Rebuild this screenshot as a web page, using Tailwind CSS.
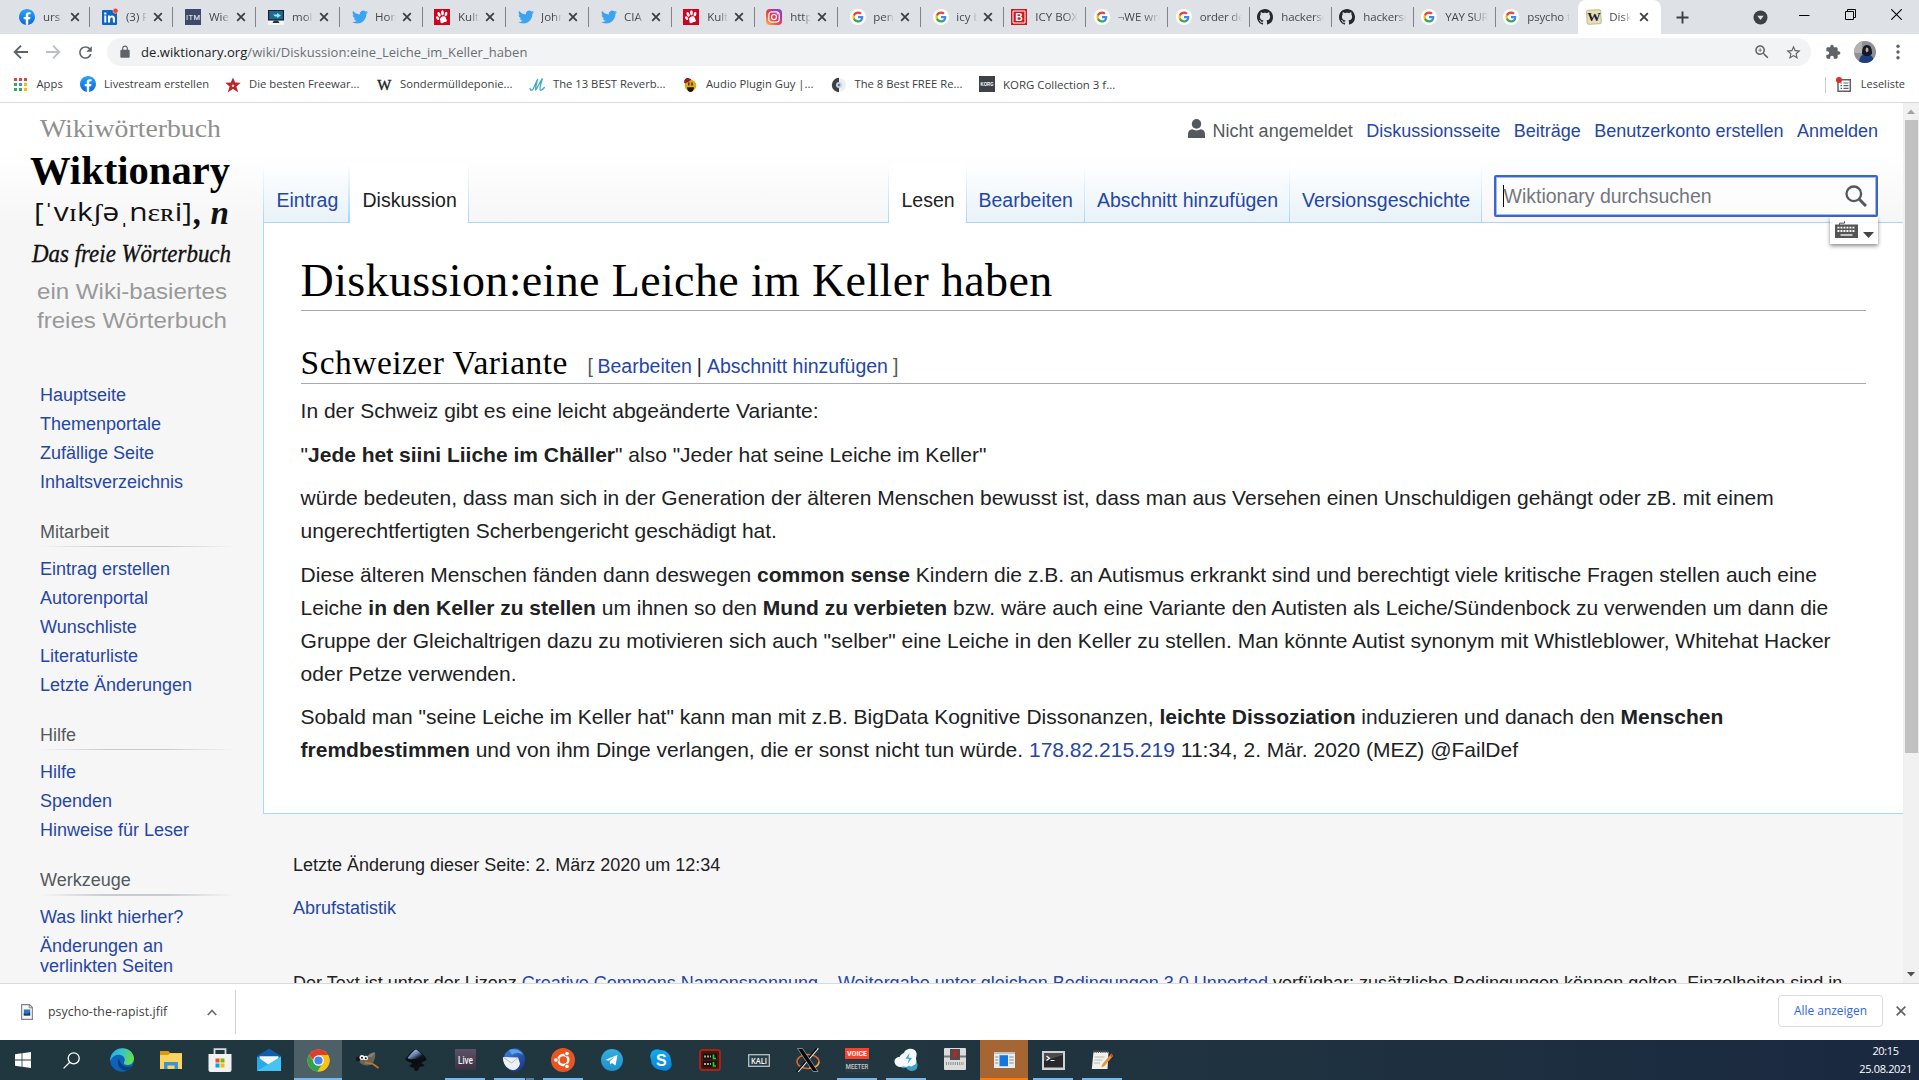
<!DOCTYPE html>
<html lang="de">
<head>
<meta charset="utf-8">
<title>Diskussion:eine Leiche im Keller haben – Wiktionary</title>
<script src="https://cdn.jsdelivr.net/npm/@tailwindcss/browser@4"></script>
</head>
<body class="flex h-[1080px] w-[1919px] flex-col overflow-hidden bg-white font-['Open_Sans',sans-serif]">

<svg class="absolute size-0" xmlns="http://www.w3.org/2000/svg">
  <defs>
    <linearGradient id="gfb" x1="0" y1="0" x2="0" y2="1"><stop offset="0" stop-color="#2aa4fb"/><stop offset="1" stop-color="#0a66e0"/></linearGradient>
    <linearGradient id="gig" x1="0" y1="1" x2="1" y2="0"><stop offset="0" stop-color="#fdc04e"/><stop offset=".4" stop-color="#f0453a"/><stop offset=".7" stop-color="#c22fa0"/><stop offset="1" stop-color="#5b4fd8"/></linearGradient>
    <linearGradient id="gedge" x1="0" y1="0" x2="1" y2=".3"><stop offset="0" stop-color="#2aa8e0"/><stop offset=".5" stop-color="#35c4c9"/><stop offset="1" stop-color="#62dd55"/></linearGradient>
    <linearGradient id="gsky" x1="0" y1="0" x2="0" y2="1"><stop offset="0" stop-color="#12a8ea"/><stop offset="1" stop-color="#0a86dd"/></linearGradient>
    <linearGradient id="gtg" x1="0" y1="0" x2="0" y2="1"><stop offset="0" stop-color="#35aee0"/><stop offset="1" stop-color="#1d90cb"/></linearGradient>
    <linearGradient id="glive" x1="0" y1="0" x2="0" y2="1"><stop offset="0" stop-color="#5c536a"/><stop offset="1" stop-color="#3a3144"/></linearGradient>
    <linearGradient id="gink" x1="0" y1="0" x2="1" y2="1"><stop offset="0" stop-color="#eef3fa"/><stop offset=".5" stop-color="#5d78a8"/><stop offset=".75" stop-color="#101318"/></linearGradient>
    <linearGradient id="gtb" x1="0" y1="0" x2="1" y2="1"><stop offset="0" stop-color="#3f86e6"/><stop offset="1" stop-color="#152f80"/></linearGradient>
  </defs>
  <symbol id="x" viewBox="0 0 10 10"><path d="M1.2 1.2l7.6 7.6M8.8 1.2L1.2 8.8" stroke="#3c4043" stroke-width="1.8" fill="none"/></symbol>
  <symbol id="fb" viewBox="0 0 24 24"><circle cx="12" cy="12" r="10" fill="#fff"/><path fill="url(#gfb)" d="M24 12.073c0-6.627-5.373-12-12-12s-12 5.373-12 12c0 5.990 4.388 10.954 10.125 11.854v-8.385H7.078v-3.470h3.047V9.430c0-3.007 1.792-4.669 4.533-4.669 1.312 0 2.686.235 2.686.235v2.953H15.830c-1.491 0-1.956.925-1.956 1.874v2.250h3.328l-.532 3.470h-2.796v8.385C19.612 23.027 24 18.062 24 12.073z"/></symbol>
  <symbol id="tw" viewBox="0 0 24 24"><path fill="#3aa3f2" d="M23.953 4.570a10 10 0 01-2.825.775 4.958 4.958 0 002.163-2.723c-.951.555-2.005.959-3.127 1.184a4.920 4.920 0 00-8.384 4.482C7.690 8.095 4.067 6.130 1.640 3.162a4.822 4.822 0 00-.666 2.475c0 1.710.87 3.213 2.188 4.096a4.904 4.904 0 01-2.228-.616v.06a4.923 4.923 0 003.946 4.827 4.996 4.996 0 01-2.212.085 4.936 4.936 0 004.604 3.417 9.867 9.867 0 01-6.102 2.105c-.39 0-.779-.023-1.170-.067a13.995 13.995 0 007.557 2.209c9.053 0 13.998-7.496 13.998-13.985 0-.21 0-.42-.015-.63A9.935 9.935 0 0024 4.590z"/></symbol>
  <symbol id="paw" viewBox="0 0 16 16"><path fill="#d0021f" d="M0 0h16v16H0z"/><g fill="#fff" transform="rotate(-12 8 8)"><path d="M5.800 9.200c1-1.600 3.800-2.400 5.300-.8.9 1.100.2 1.900.8 3 .7 1.300-.5 2.600-2 2.100-1.200-.4-1.900.8-3.200.5-1.500-.4-1.300-1.700-1-2.500.3-.9-.4-1.300.1-2.300z"/><ellipse cx="3.500" cy="8.200" rx="1.300" ry="2.100" transform="rotate(-25 3.500 8.200)"/><ellipse cx="5.700" cy="4.800" rx="1.400" ry="2.500" transform="rotate(-10 5.500 4.800)"/><ellipse cx="9.300" cy="4" rx="1.400" ry="2.600" transform="rotate(10 9.300 4)"/><ellipse cx="12.500" cy="6" rx="1.300" ry="2.300" transform="rotate(28 12.500 6)"/></g></symbol>
  <symbol id="gg" viewBox="0 0 32 32"><circle cx="16" cy="16" r="16" fill="#fff"/><g transform="translate(4 4)"><path fill="#4285f4" d="M22.560 12.250c0-.78-.07-1.530-.2-2.250H12v4.260h5.920c-.26 1.370-1.040 2.530-2.210 3.310v2.770h3.570c2.080-1.920 3.280-4.740 3.280-8.090z"/><path fill="#34a853" d="M12 23c2.970 0 5.460-.98 7.280-2.660l-3.570-2.770c-.98.66-2.230 1.060-3.710 1.060-2.860 0-5.290-1.930-6.160-4.530H2.180v2.840C3.990 20.530 7.700 23 12 23z"/><path fill="#fbbc05" d="M5.840 14.090c-.22-.66-.35-1.360-.35-2.090s.13-1.430.35-2.090V7.070H2.180C1.430 8.550 1 10.220 1 12s.43 3.450 1.180 4.930l3.660-2.840z"/><path fill="#ea4335" d="M12 5.380c1.620 0 3.060.56 4.210 1.640l3.150-3.150C17.450 2.090 14.970 1 12 1 7.700 1 3.990 3.470 2.180 7.070l3.660 2.840c.87-2.600 3.300-4.530 6.160-4.530z"/></g></symbol>
  <symbol id="gh" viewBox="0 0 16 16"><path fill="#24292e" d="M8 0C3.580 0 0 3.580 0 8c0 3.540 2.290 6.530 5.470 7.590.4.07.55-.17.55-.38 0-.19-.01-.82-.01-1.490-2.010.37-2.530-.49-2.690-.94-.09-.23-.48-.94-.82-1.130-.28-.15-.68-.52-.01-.53.63-.01 1.080.58 1.230.82.72 1.210 1.870.87 2.330.66.07-.52.28-.87.51-1.070-1.780-.2-3.640-.89-3.640-3.950 0-.87.31-1.590.82-2.150-.08-.2-.36-1.020.08-2.120 0 0 .67-.21 2.200.82.64-.18 1.320-.27 2-.27s1.360.09 2 .27c1.530-1.040 2.200-.82 2.200-.82.44 1.100.16 1.920.08 2.120.51.56.82 1.270.82 2.150 0 3.070-1.870 3.750-3.650 3.950.29.25.54.73.54 1.480 0 1.070-.01 1.930-.01 2.200 0 .21.15.46.55.38A8.010 8.010 0 0016 8c0-4.420-3.580-8-8-8z"/></symbol>
</svg>

<!-- Tab strip -->
<header class="flex h-[34px] shrink-0 items-center bg-[#dee1e6] pl-[7.4px] text-[11.5px] text-[#45494d]">
  <div class="flex h-full w-[83.04px] shrink-0 items-center pl-[12px]"><svg class="size-4 shrink-0"><use href="#fb"/></svg><span class="ml-[7.500px] w-[21px] overflow-hidden whitespace-nowrap [mask-image:linear-gradient(to_right,black_60%,transparent)]">urs</span><svg class="ml-[6px] size-[10px] shrink-0"><use href="#x"/></svg><i class="ml-auto h-5 w-px bg-[#808488]"></i></div>
  <div class="flex h-full w-[83.04px] shrink-0 items-center pl-[12px]"><svg class="size-4 shrink-0 overflow-visible" viewBox="0 0 16 16"><rect y="1" width="15" height="15" rx="1" fill="#0a66c2"/><path d="M2.300 6.500h2v7h-2zM2.200 3.500h2.200v2H2.200zM6 6.500h2v1c1-1.700 5-1.700 5 2v4h-2.100V10c0-2.300-2.800-2-2.800 0v3.500H6z" fill="#fff"/><circle cx="13.500" cy="1.800" r="2.600" fill="#f5402c" stroke="#dee1e6" stroke-width=".6"/></svg><span class="ml-[7.500px] w-[21px] overflow-hidden whitespace-nowrap [mask-image:linear-gradient(to_right,black_60%,transparent)]">(3) P</span><svg class="ml-[6px] size-[10px] shrink-0"><use href="#x"/></svg><i class="ml-auto h-5 w-px bg-[#808488]"></i></div>
  <div class="flex h-full w-[83.04px] shrink-0 items-center pl-[12px]"><svg class="size-4 shrink-0" viewBox="0 0 16 16"><path fill="#3b4a6b" d="M0 0h16v16H0z"/><text x="1" y="11" font-size="7.500" font-family="Roboto" fill="#fff" textLength="14">ITM</text></svg><span class="ml-[7.500px] w-[21px] overflow-hidden whitespace-nowrap [mask-image:linear-gradient(to_right,black_60%,transparent)]">Wien</span><svg class="ml-[6px] size-[10px] shrink-0"><use href="#x"/></svg><i class="ml-auto h-5 w-px bg-[#808488]"></i></div>
  <div class="flex h-full w-[83.04px] shrink-0 items-center pl-[12px]"><svg class="size-4 shrink-0" viewBox="0 0 16 16"><path d="M0 12h16v4H0z" fill="#f4f6f8"/><rect y="1" width="16" height="10.500" fill="#16212f"/><rect x="1.200" y="2" width="13.600" height="8.300" fill="#1b6b92"/><path d="M5 5.500h4V4l4 2.500L9 9V7.500H7z" fill="#9fe4f0"/><path d="M6 11.500h4l1.500 2.500h-7z" fill="#28323d"/></svg><span class="ml-[7.500px] w-[21px] overflow-hidden whitespace-nowrap [mask-image:linear-gradient(to_right,black_60%,transparent)]">mold</span><svg class="ml-[6px] size-[10px] shrink-0"><use href="#x"/></svg><i class="ml-auto h-5 w-px bg-[#808488]"></i></div>
  <div class="flex h-full w-[83.04px] shrink-0 items-center pl-[12px]"><svg class="size-4 shrink-0"><use href="#tw"/></svg><span class="ml-[7.500px] w-[21px] overflow-hidden whitespace-nowrap [mask-image:linear-gradient(to_right,black_60%,transparent)]">Hom</span><svg class="ml-[6px] size-[10px] shrink-0"><use href="#x"/></svg><i class="ml-auto h-5 w-px bg-[#808488]"></i></div>
  <div class="flex h-full w-[83.04px] shrink-0 items-center pl-[11px]"><svg class="size-4 shrink-0"><use href="#paw"/></svg><span class="ml-[8.500px] w-[21px] overflow-hidden whitespace-nowrap [mask-image:linear-gradient(to_right,black_60%,transparent)]">Kultu</span><svg class="ml-[6px] size-[10px] shrink-0"><use href="#x"/></svg><i class="ml-auto h-5 w-px bg-[#808488]"></i></div>
  <div class="flex h-full w-[83.04px] shrink-0 items-center pl-[12px]"><svg class="size-4 shrink-0"><use href="#tw"/></svg><span class="ml-[7.500px] w-[21px] overflow-hidden whitespace-nowrap [mask-image:linear-gradient(to_right,black_60%,transparent)]">John</span><svg class="ml-[6px] size-[10px] shrink-0"><use href="#x"/></svg><i class="ml-auto h-5 w-px bg-[#808488]"></i></div>
  <div class="flex h-full w-[83.04px] shrink-0 items-center pl-[12px]"><svg class="size-4 shrink-0"><use href="#tw"/></svg><span class="ml-[7.500px] w-[21px] overflow-hidden whitespace-nowrap [mask-image:linear-gradient(to_right,black_60%,transparent)]">CIA</span><svg class="ml-[6px] size-[10px] shrink-0"><use href="#x"/></svg><i class="ml-auto h-5 w-px bg-[#808488]"></i></div>
  <div class="flex h-full w-[83.04px] shrink-0 items-center pl-[11px]"><svg class="size-4 shrink-0"><use href="#paw"/></svg><span class="ml-[8.500px] w-[21px] overflow-hidden whitespace-nowrap [mask-image:linear-gradient(to_right,black_60%,transparent)]">Kultu</span><svg class="ml-[6px] size-[10px] shrink-0"><use href="#x"/></svg><i class="ml-auto h-5 w-px bg-[#808488]"></i></div>
  <div class="flex h-full w-[83.04px] shrink-0 items-center pl-[11px]"><svg class="size-4 shrink-0" viewBox="0 0 16 16"><rect width="16" height="16" rx="4" fill="url(#gig)"/><rect x="2.800" y="2.800" width="10.400" height="10.400" rx="3" fill="none" stroke="#fff" stroke-width="1.200"/><circle cx="8" cy="8" r="2.500" fill="none" stroke="#fff" stroke-width="1.200"/><circle cx="11.200" cy="4.800" r=".7" fill="#fff"/></svg><span class="ml-[8.500px] w-[21px] overflow-hidden whitespace-nowrap [mask-image:linear-gradient(to_right,black_60%,transparent)]">https</span><svg class="ml-[6px] size-[10px] shrink-0"><use href="#x"/></svg><i class="ml-auto h-5 w-px bg-[#808488]"></i></div>
  <div class="flex h-full w-[83.04px] shrink-0 items-center pl-[12px]"><svg class="size-4 shrink-0"><use href="#gg"/></svg><span class="ml-[7.500px] w-[21px] overflow-hidden whitespace-nowrap [mask-image:linear-gradient(to_right,black_60%,transparent)]">pent</span><svg class="ml-[6px] size-[10px] shrink-0"><use href="#x"/></svg><i class="ml-auto h-5 w-px bg-[#808488]"></i></div>
  <div class="flex h-full w-[83.04px] shrink-0 items-center pl-[12px]"><svg class="size-4 shrink-0"><use href="#gg"/></svg><span class="ml-[7.500px] w-[21px] overflow-hidden whitespace-nowrap [mask-image:linear-gradient(to_right,black_60%,transparent)]">icy b</span><svg class="ml-[6px] size-[10px] shrink-0"><use href="#x"/></svg><i class="ml-auto h-5 w-px bg-[#808488]"></i></div>
  <div class="flex h-full w-[82px] shrink-0 items-center pl-[7.500px]"><svg class="size-4 shrink-0" viewBox="0 0 16 16"><path fill="#d5121a" d="M0 0h16v16H0z"/><path d="M2 2h12v12H2z" fill="none" stroke="#fff" stroke-width="1"/><text x="4.300" y="11.700" font-size="10.500" font-weight="700" font-family="Liberation Sans" fill="#fff">B</text></svg><span class="ml-[8px] w-[43px] overflow-hidden whitespace-nowrap [mask-image:linear-gradient(to_right,black_70%,transparent)]">ICY BOX</span><i class="ml-auto h-5 w-px bg-[#808488]"></i></div>
  <div class="flex h-full w-[82px] shrink-0 items-center pl-[8.500px]"><svg class="size-4 shrink-0"><use href="#gg"/></svg><span class="ml-[7.500px] w-[42px] overflow-hidden whitespace-nowrap [mask-image:linear-gradient(to_right,black_60%,transparent)]">¬WE wro</span><i class="ml-auto h-5 w-px bg-[#808488]"></i></div>
  <div class="flex h-full w-[82px] shrink-0 items-center pl-[8.500px]"><svg class="size-4 shrink-0"><use href="#gg"/></svg><span class="ml-[7.500px] w-[42px] overflow-hidden tracking-[-0.200px] whitespace-nowrap [mask-image:linear-gradient(to_right,black_70%,transparent)]">order def</span><i class="ml-auto h-5 w-px bg-[#808488]"></i></div>
  <div class="flex h-full w-[82px] shrink-0 items-center pl-[7.500px]"><svg class="size-4 shrink-0"><use href="#gh"/></svg><span class="ml-[8px] w-[43px] overflow-hidden tracking-[-0.150px] whitespace-nowrap [mask-image:linear-gradient(to_right,black_75%,transparent)]">hackersc</span><i class="ml-auto h-5 w-px bg-[#808488]"></i></div>
  <div class="flex h-full w-[82px] shrink-0 items-center pl-[7.500px]"><svg class="size-4 shrink-0"><use href="#gh"/></svg><span class="ml-[8px] w-[43px] overflow-hidden tracking-[-0.150px] whitespace-nowrap [mask-image:linear-gradient(to_right,black_75%,transparent)]">hackersc</span><i class="ml-auto h-5 w-px bg-[#808488]"></i></div>
  <div class="flex h-full w-[82px] shrink-0 items-center pl-[7.500px]"><svg class="size-4 shrink-0"><use href="#gg"/></svg><span class="ml-[8px] w-[43px] overflow-hidden tracking-[-0.250px] whitespace-nowrap [mask-image:linear-gradient(to_right,black_65%,transparent)]">YAY SURF</span><i class="ml-auto h-5 w-px bg-[#808488]"></i></div>
  <div class="flex h-full w-[82px] shrink-0 items-center pl-[7.500px]"><svg class="size-4 shrink-0"><use href="#gg"/></svg><span class="ml-[8px] w-[43px] overflow-hidden tracking-[-0.150px] whitespace-nowrap [mask-image:linear-gradient(to_right,black_80%,transparent)]">psycho th</span></div>
  <div class="flex h-full w-[83px] shrink-0 items-center rounded-t-lg bg-white pl-[8px]"><svg class="size-4 shrink-0" viewBox="0 0 16 16"><rect x=".8" y="1" width="14.200" height="14" rx="1.500" fill="#e9dfb4" stroke="#b9ab7c" stroke-width=".8" transform="rotate(-3 8 8)"/><text x="1.200" y="12.300" font-size="12.500" font-weight="700" font-family="Liberation Serif" fill="#161a3c" textLength="13.500" lengthAdjust="spacingAndGlyphs">W</text></svg><span class="ml-[7.500px] w-[22px] overflow-hidden whitespace-nowrap [mask-image:linear-gradient(to_right,black_60%,transparent)]">Disku</span><svg class="ml-[8px] size-[10px] shrink-0"><use href="#x"/></svg></div>
  <svg class="ml-[15px] size-[13px]" viewBox="0 0 13 13"><path d="M6.500.5v12M.5 6.500h12" stroke="#3c4043" stroke-width="1.900"/></svg>
  <svg class="ml-[64px] size-[15px]" viewBox="0 0 15 15"><circle cx="7.500" cy="7.500" r="7" fill="#3c4043"/><path d="M4.300 5.700h6.400L7.500 10z" fill="#dee1e6"/></svg>
  <svg class="mb-[6px] ml-[31px] size-[11px]" viewBox="0 0 11 11"><path d="M0 6.500h10.500" stroke="#000"/></svg>
  <svg class="mb-[6px] ml-[35px] size-[11px]" viewBox="0 0 11 11"><path d="M.5 2.500h8v8h-8zM2.500 2.500v-2h8v8h-2" fill="none" stroke="#000"/></svg>
  <svg class="mb-[6px] ml-[35px] size-[11px]" viewBox="0 0 11 11"><path d="M.3.300l10.400 10.400M10.700.3L.3 10.700" stroke="#000" stroke-width="1.100"/></svg>
</header>

<!-- Toolbar -->
<div class="flex h-[36px] shrink-0 items-center bg-white pl-[13px]">
  <svg class="size-4" viewBox="0 0 16 16"><path d="M15 8H2M8 1.700L1.700 8 8 14.300" stroke="#5f6368" stroke-width="1.900" fill="none"/></svg>
  <svg class="ml-[16px] size-4" viewBox="0 0 16 16"><path d="M1 8h13M8 1.700L14.300 8 8 14.300" stroke="#bdc0c3" stroke-width="1.900" fill="none"/></svg>
  <svg class="ml-[14.500px] size-[19px]" viewBox="0 0 24 24"><path fill="#5f6368" d="M17.650 6.350C16.200 4.900 14.210 4 12 4c-4.420 0-7.990 3.580-7.990 8s3.570 8 7.990 8c3.730 0 6.840-2.550 7.730-6h-2.080c-.82 2.330-3.040 4-5.650 4-3.310 0-6-2.690-6-6s2.690-6 6-6c1.660 0 3.140.69 4.220 1.780L13 11h7V4l-2.350 2.350z"/></svg>
  <div class="ml-[12.500px] flex h-7 w-[1704px] items-center rounded-full bg-[#f1f3f4] pl-[11px]">
    <svg class="size-[14px]" viewBox="0 0 24 24"><path fill="#5f6368" d="M18 8h-1V6c0-2.760-2.240-5-5-5S7 3.240 7 6v2H6c-1.100 0-2 .9-2 2v10c0 1.100.9 2 2 2h12c1.100 0 2-.9 2-2V10c0-1.100-.9-2-2-2zM9 6c0-1.660 1.340-3 3-3s3 1.340 3 3v2H9z"/></svg>
    <span class="mt-px ml-[9px] text-[13px] tracking-[0.065px] text-[#6b6f74]"><span class="text-[#202124]">de.wiktionary.org</span>/wiki/Diskussion:eine_Leiche_im_Keller_haben</span>
    <svg class="mr-[14px] ml-auto size-[18px]" viewBox="0 0 24 24"><path fill="#5f6368" d="M15.500 14h-.79l-.28-.27C15.410 12.590 16 11.110 16 9.500 16 5.910 13.090 3 9.500 3S3 5.910 3 9.500 5.910 16 9.500 16c1.610 0 3.090-.59 4.230-1.570l.27.28v.79l5 4.990L20.490 19l-4.990-5zm-6 0C7.010 14 5 11.990 5 9.500S7.010 5 9.500 5 14 7.010 14 9.500 11.990 14 9.500 14zm2.500-4h-2v2H9v-2H7V9h2V7h1v2h2v1z"/></svg>
    <svg class="mr-[9.500px] size-[17px]" viewBox="0 0 24 24"><path fill="#5f6368" d="M22 9.240l-7.190-.62L12 2 9.190 8.630 2 9.240l5.460 4.730L5.820 21 12 17.270 18.180 21l-1.630-7.030L22 9.240zM12 15.400l-3.760 2.270 1-4.280-3.320-2.880 4.380-.38L12 6.100l1.710 4.040 4.380.38-3.320 2.880 1 4.280L12 15.400z"/></svg>
  </div>
  <svg class="ml-[14px] size-[16px]" viewBox="0 0 24 24"><path fill="#5f6368" d="M20.500 11H19V7c0-1.100-.9-2-2-2h-4V3.500C13 2.120 11.880 1 10.500 1S8 2.120 8 3.500V5H4c-1.100 0-1.990.9-1.990 2v3.800H3.500c1.490 0 2.700 1.210 2.700 2.700s-1.210 2.700-2.700 2.700H2V20c0 1.100.9 2 2 2h3.800v-1.500c0-1.490 1.210-2.700 2.700-2.700 1.490 0 2.700 1.210 2.700 2.700V22H17c1.100 0 2-.9 2-2v-4h1.500c1.380 0 2.500-1.120 2.500-2.500S21.880 11 20.500 11z"/></svg>
  <svg class="ml-[13px] size-[22px]" viewBox="0 0 22 22"><defs><clipPath id="av"><circle cx="11" cy="11" r="11"/></clipPath></defs><g clip-path="url(#av)"><path fill="#8f8f94" d="M0 0h22v22H0z"/><path fill="#b5b3b2" d="M0 0h8v12H0z"/><path fill="#1f3f7c" d="M5 22c0-6 3-9 7-9s8 2 8 9z"/><path fill="#14182a" d="M8 13c0-5 1-9 5-9s5 4 5 9l-3 2h-4z"/><path fill="#c8a493" d="M12 6.500l2.200.5.300 3-1.800 1.500-1.200-2z"/></g></svg>
  <svg class="ml-[13px] size-[18px]" viewBox="0 0 18 18" fill="#5f6368"><circle cx="9" cy="3.200" r="1.700"/><circle cx="9" cy="9" r="1.700"/><circle cx="9" cy="14.800" r="1.700"/></svg>
</div>

<!-- Bookmarks -->
<nav class="flex h-[32px] shrink-0 items-center pb-[3px] pl-[13.500px] text-[11.250px] whitespace-nowrap text-[#3c4043]">
  <div class="flex w-[66.500px] items-center gap-[10px]"><svg class="size-[13px]" viewBox="0 0 13 13"><path fill="#ea4335" d="M0 0h3v3H0zM5 0h3v3H5zM10 0h3v3h-3z"/><path fill="#34a853" d="M0 5h3v3H0zM0 10h3v3H0zM5 10h3v3H5z"/><path fill="#4285f4" d="M5 5h3v3H5z"/><path fill="#fbbc05" d="M10 5h3v3h-3zM10 10h3v3h-3z"/></svg>Apps</div>
  <div class="flex w-[145px] items-center gap-2"><svg class="size-4"><use href="#fb"/></svg><span class="text-[11.150px]">Livestream erstellen</span></div>
  <div class="flex w-[151px] items-center gap-2"><svg class="size-4" viewBox="0 0 16 16"><path fill="#b3282d" d="M8 .5l2.200 5 5.500.3-4.300 3.600 1.800 5.800L8 12l-5.200 3.200 1.800-5.800L.3 5.800l5.500-.3z"/><circle cx="8" cy="8.800" r="1.300" fill="#f0c8c8"/></svg>Die besten Freewar...</div>
  <div class="flex w-[153px] items-center gap-2"><svg class="size-4" viewBox="0 0 16 16"><text x="1.200" y="13" font-size="14" font-family="Liberation Serif" fill="#202020" stroke="#202020" stroke-width=".4" textLength="14" lengthAdjust="spacingAndGlyphs">W</text></svg>Sondermülldeponie...</div>
  <div class="flex w-[153px] items-center gap-2"><svg class="size-4" viewBox="0 0 16 16"><path d="M1 11.500c0 2 2 2.500 3.300.3C5.800 9 7 5 8.800 2 7.500 6 6.300 10 6.800 12.800 8.500 11 10.500 5.500 13.500 1.500 12 6 10.200 11.500 11.300 13c1 .8 2.500-.5 4-2.500" fill="none" stroke="#45a9c0" stroke-width="1.300" stroke-linecap="round"/></svg>The 13 BEST Reverb...</div>
  <div class="flex w-[148.500px] items-center gap-2"><svg class="size-4" viewBox="0 0 16 16"><circle cx="8.500" cy="8.500" r="5.800" fill="#e2a719"/><path d="M2 5.500C2 2 4 .5 6.500 1l3 1.500-2.500 2-4 2z" fill="#8c2022"/><path d="M6.800 5.500v3M10 5.500v3" stroke="#201708" stroke-width="1.200"/><path d="M5 10.200h7c-.3 3.600-1.500 4.800-3.500 4.800S5.300 13.800 5 10.200z" fill="#201708"/></svg>Audio Plugin Guy |...</div>
  <div class="flex w-[148.500px] items-center gap-2"><svg class="size-4" viewBox="0 0 16 16"><circle cx="8" cy="8" r="7" fill="#eceef0"/><path fill="#3d3f43" d="M8 .8A7.200 7.200 0 008 15.200z"/><circle cx="8" cy="8" r="3" fill="#bcd6e2"/><circle cx="8" cy="8" r="1.200" fill="#5a7f92"/></svg>The 8 Best FREE Re...</div>
  <div class="flex items-center gap-2"><svg class="size-4" viewBox="0 0 16 16"><path fill="#3e4247" d="M0 0h16v16H0z"/><text x="1.500" y="10" font-size="5" font-weight="700" font-family="Liberation Sans" fill="#fff" textLength="13" lengthAdjust="spacingAndGlyphs">KORG</text></svg><span class="text-[11.450px]">KORG Collection 3 f...</span></div>
  <i class="ml-auto h-4 w-px bg-[#c9ccd0]"></i>
  <svg class="ml-[10px] size-4" viewBox="0 0 16 16"><path d="M3 2.700h11.300v11.600H2V4.500" fill="none" stroke="#5f6368" stroke-width="1.500"/><path d="M4.500 6h1.500M4.500 8.700h1.500M4.500 11.400h1.500M7.500 6h5M7.500 8.700h5M7.500 11.400h5" stroke="#5f6368" stroke-width="1.200"/><circle cx="3" cy="3" r="3" fill="#d93025"/></svg>
  <span class="mr-[14px] ml-[9px] text-[11px]">Leseliste</span>
</nav>
<div class="h-px shrink-0 bg-[#d8dadc]"></div>

<!-- Page -->
<div class="flex h-[880px] shrink-0 overflow-hidden bg-[#f6f6f6] font-['Liberation_Sans',Arial,sans-serif]">
  <!-- Sidebar -->
  <aside class="flex w-[263px] shrink-0 flex-col text-[18px] text-[#2546a6]">
    <div class="h-[278px] shrink-0 bg-[linear-gradient(#fff_0,#fff_50px,#f6f6f6_120px)]">
      <svg class="h-[240px] w-[263px]" viewBox="0 103 263 240">
        <text x="40" y="137" font-family="Liberation Serif" font-size="25" fill="#8f8f8f" textLength="181" lengthAdjust="spacingAndGlyphs">Wikiwörterbuch</text>
        <text x="30" y="184" font-family="Liberation Serif" font-size="40" font-weight="700" textLength="200" lengthAdjust="spacingAndGlyphs">Wiktionary</text>
        <text x="34" y="221" font-family="Open Sans" font-size="26" fill="#111" textLength="158" lengthAdjust="spacingAndGlyphs">[ˈvɪkʃəˌnɛʀi]</text>
        <text x="194" y="224" font-family="Liberation Serif" font-size="34" font-weight="700" font-style="italic" fill="#111" textLength="35" lengthAdjust="spacingAndGlyphs">, n</text>
        <text x="32" y="262" font-family="Liberation Serif" font-size="25" font-style="italic" fill="#111" stroke="#111" stroke-width=".35" textLength="199" lengthAdjust="spacingAndGlyphs">Das freie Wörterbuch</text>
        <text x="37" y="299" font-family="Liberation Sans" font-size="22.500" fill="#999" textLength="190" lengthAdjust="spacingAndGlyphs">ein Wiki-basiertes</text>
        <text x="37" y="328" font-family="Liberation Sans" font-size="22.500" fill="#999" textLength="190" lengthAdjust="spacingAndGlyphs">freies Wörterbuch</text>
      </svg>
    </div>
    <ul class="pl-[40px] leading-[29px]">
      <li>Hauptseite</li><li>Themenportale</li><li>Zufällige Seite</li><li>Inhaltsverzeichnis</li>
    </ul>
    <h3 class="pt-[25px] pb-[4px] pl-[40px] leading-[20px] text-[#54595d]">Mitarbeit</h3>
    <div class="mb-[8px] ml-[40px] h-px w-[195px] shrink-0 bg-[linear-gradient(to_right,transparent,#c8ccd1_33%,#c8ccd1_66%,transparent)]"></div>
    <ul class="pl-[40px] leading-[29px]">
      <li>Eintrag erstellen</li><li>Autorenportal</li><li>Wunschliste</li><li>Literaturliste</li><li>Letzte Änderungen</li>
    </ul>
    <h3 class="pt-[25px] pb-[4px] pl-[40px] leading-[20px] text-[#54595d]">Hilfe</h3>
    <div class="mb-[8px] ml-[40px] h-px w-[195px] shrink-0 bg-[linear-gradient(to_right,transparent,#c8ccd1_33%,#c8ccd1_66%,transparent)]"></div>
    <ul class="pl-[40px] leading-[29px]">
      <li>Hilfe</li><li>Spenden</li><li>Hinweise für Leser</li>
    </ul>
    <h3 class="pt-[25px] pb-[4px] pl-[40px] leading-[20px] text-[#54595d]">Werkzeuge</h3>
    <div class="mb-[7px] ml-[40px] h-[2px] w-[195px] shrink-0 bg-[linear-gradient(to_right,transparent,#c8ccd1_33%,#c8ccd1_66%,transparent)]"></div>
    <ul class="pl-[40px]">
      <li class="leading-[29px]">Was linkt hierher?</li><li class="pt-[4px] leading-[20px]">Änderungen an<br>verlinkten Seiten</li>
    </ul>
  </aside>

  <!-- Main column -->
  <div class="flex w-[1640px] shrink-0 flex-col">
    <div class="flex h-[120px] shrink-0 flex-col bg-[linear-gradient(#fff_0,#fff_50px,#f6f6f6_120px)]">
      <div class="flex h-[60px] items-start justify-end gap-[13.500px] pt-[17px] pr-[25px] text-[18px] leading-[22px] text-[#2546a6]">
        <span class="flex text-[#54595d]"><svg class="-mt-[1px] mr-[7.500px] h-[19px] w-[17px]" viewBox="0 0 17 19" fill="#54595d"><ellipse cx="8.500" cy="4.900" rx="4.700" ry="4.900"/><path d="M0 19v-4c0-2.500 1.500-4.500 4.300-4.700 2.400 1.500 6 1.500 8.400 0C15.500 10.500 17 12.500 17 15v4z"/></svg>Nicht angemeldet</span>
        <span>Diskussionsseite</span><span>Beiträge</span><span>Benutzerkonto erstellen</span><span>Anmelden</span>
      </div>
      <div class="flex h-[60px] text-[19.500px] leading-[24px] whitespace-nowrap text-[#2546a6]">
        <i class="w-px bg-linear-to-b from-white to-[#a7d7f9]"></i>
        <div class="w-[84px] border-b border-[#a7d7f9] bg-linear-to-b from-white to-[#e8f2f8] pt-[25px] pl-[12.500px]">Eintrag</div>
        <i class="w-[2px] bg-linear-to-b from-white to-[#a7d7f9]"></i>
        <div class="w-[118px] bg-white pt-[25px] pl-[12.500px] text-[#202122]">Diskussion</div>
        <i class="w-px bg-linear-to-b from-white to-[#a7d7f9]"></i>
        <div class="w-[419px] border-b border-[#a7d7f9]"></div>
        <i class="w-px bg-linear-to-b from-white to-[#a7d7f9]"></i>
        <div class="w-[77px] bg-white pt-[25px] pl-[12.500px] text-[#202122]">Lesen</div>
        <i class="w-px bg-linear-to-b from-white to-[#a7d7f9]"></i>
        <div class="w-[117px] border-b border-[#a7d7f9] bg-linear-to-b from-white to-[#e8f2f8] pt-[25px] pl-[11.500px]">Bearbeiten</div>
        <i class="w-px bg-linear-to-b from-white to-[#a7d7f9]"></i>
        <div class="w-[204px] border-b border-[#a7d7f9] bg-linear-to-b from-white to-[#e8f2f8] pt-[25px] pl-[12px]">Abschnitt hinzufügen</div>
        <i class="w-px bg-linear-to-b from-white to-[#a7d7f9]"></i>
        <div class="w-[191px] border-b border-[#a7d7f9] bg-linear-to-b from-white to-[#e8f2f8] pt-[25px] pl-[12px]">Versionsgeschichte</div>
        <i class="w-px bg-linear-to-b from-white to-[#a7d7f9]"></i>
        <div class="relative flex-1 border-b border-[#a7d7f9] pt-[12px] pl-[12px]">
          <div class="flex h-[42px] w-[384px] items-center rounded-[2px] border-2 border-[#3a66cc] bg-white/60 pl-[7px] shadow-[inset_0_0_0_1px_#a4b8e8]">
            <i class="h-[22px] w-px bg-black"></i><span class="-mt-px -ml-[0.500px] text-[#72777d]">Wiktionary durchsuchen</span>
            <svg class="mr-[9px] ml-auto h-[22px] w-[22px]" viewBox="0 0 22 22" fill="none" stroke="#54595d"><circle cx="8.800" cy="8.800" r="7.300" stroke-width="2.300"/><path d="M14 14l7 7" stroke-width="3"/></svg>
          </div>
          <div class="absolute top-[54px] right-[25px] flex h-[27px] w-[48px] items-center bg-white/85 pl-[5px] shadow-[0_2px_4px_rgba(0,0,0,0.45)]">
            <svg class="-mt-[2px] h-[17px] w-[23px]" viewBox="0 0 23 17"><path d="M4.500 4V2.200h5V.3" fill="none" stroke="#555" stroke-width="1"/><rect y="3.500" width="23" height="13.500" fill="#555"/><path d="M2.500 6.700h18M2.500 10h18" stroke="#fff" stroke-width="1.800" stroke-dasharray="1.900 1.100"/><path d="M5.500 14h12" stroke="#fff" stroke-width="1.300"/></svg>
            <svg class="mt-[8px] ml-[5px] h-[6px] w-[11px]" viewBox="0 0 11 6"><path d="M0 0h11L5.500 6z" fill="#444"/></svg>
          </div>
        </div>
      </div>
    </div>

    <main class="h-[591px] shrink-0 border-b border-l border-[#a7d7f9] bg-white pr-[37px] pl-[36.600px] text-[21px] leading-[33px] text-[#202122]">
      <h1 class="h-[88px] border-b border-[#a2a9b1] pt-[30px] font-['Liberation_Serif',serif] text-[46px] leading-[56px] tracking-[0.360px] whitespace-nowrap text-black">Diskussion:eine Leiche im Keller haben</h1>
      <h2 class="flex h-[73px] items-baseline border-b border-[#a2a9b1] pt-[32px] leading-[40px] whitespace-nowrap"><span class="w-[287px] font-['Liberation_Serif',serif] text-[33.500px] tracking-[0.460px] text-black">Schweizer Variante</span><span class="-translate-y-px text-[19.500px] text-[#54595d]">[<span class="ml-[4.500px] text-[#2546a6]">Bearbeiten</span><span class="mx-[5px] text-[#202122]">|</span><span class="text-[#2546a6]">Abschnitt hinzufügen</span><span class="ml-[5px]">]</span></span></h2>
      <p class="mt-[10px] mb-[10.500px]">In der Schweiz gibt es eine leicht abgeänderte Variante:</p>
      <p class="mb-[10.500px]">"<b>Jede het siini Liiche im Chäller</b>" also "Jeder hat seine Leiche im Keller"</p>
      <p class="mb-[10.500px]">würde bedeuten, dass man sich in der Generation der älteren Menschen bewusst ist, dass man aus Versehen einen Unschuldigen gehängt oder zB. mit einem ungerechtfertigten Scherbengericht geschädigt hat.</p>
      <p class="mb-[10.500px]">Diese älteren Menschen fänden dann deswegen <b>common sense</b> Kindern die z.B. an Autismus erkrankt sind und berechtigt viele kritische Fragen stellen auch eine Leiche <b>in den Keller zu stellen</b> um ihnen so den <b>Mund zu verbieten</b> bzw. wäre auch eine Variante den Autisten als Leiche/Sündenbock zu verwenden um dann die Gruppe der Gleichaltrigen dazu zu motivieren sich auch "selber" eine Leiche in den Keller zu stellen. Man könnte Autist synonym mit Whistleblower, Whitehat Hacker oder Petze verwenden.</p>
      <p>Sobald man "seine Leiche im Keller hat" kann man mit z.B. BigData Kognitive Dissonanzen, <b>leichte Dissoziation</b> induzieren und danach den <b>Menschen fremdbestimmen</b> und von ihm Dinge verlangen, die er sonst nicht tun würde. <span class="text-[#2546a6]">178.82.215.219</span> 11:34, 2. Mär. 2020 (MEZ) @FailDef</p>
    </main>

    <footer class="flex flex-col gap-[22px] pt-[41px] pl-[30px] text-[18px] leading-[21px] whitespace-nowrap text-[#202122]">
      <p>Letzte Änderung dieser Seite: 2. März 2020 um 12:34</p>
      <p class="mb-[32px] text-[#2546a6]">Abrufstatistik</p>
      <p>Der Text ist unter der Lizenz <span class="text-[#2546a6]">Creative Commons Namensnennung – Weitergabe unter gleichen Bedingungen 3.0 Unported</span> verfügbar; zusätzliche Bedingungen können gelten. Einzelheiten sind in</p>
    </footer>
  </div>

  <!-- Scrollbar -->
  <div class="flex w-[16px] shrink-0 flex-col items-center bg-[#f1f1f1]">
    <svg class="h-[17px] w-[16px] shrink-0" viewBox="0 0 16 17"><path d="M4 11l4-4.500L12 11z" fill="#a3a3a3"/></svg>
    <div class="h-[633px] w-[13px] shrink-0 bg-[#c1c1c1]"></div>
    <svg class="mt-auto h-[17px] w-[16px] shrink-0" viewBox="0 0 16 17"><path d="M4 6h8l-4 4.500z" fill="#505050"/></svg>
  </div>
</div>

<!-- Download shelf -->
<div class="flex h-[57px] shrink-0 items-center border-t border-[#d8dadc] bg-white pl-[21px] text-[12.300px] text-[#3c4043]">
  <svg class="h-[16px] w-[12px]" viewBox="0 0 12 16"><path d="M.6.600h8l2.800 2.900v11.900H.6z" fill="#fafafa" stroke="#83878c" stroke-width="1.200"/><path d="M8.200.6v3.200h3.200" fill="none" stroke="#83878c"/><path d="M2.800 5.500h6.400v6H2.800z" fill="#2a75c4"/><path d="M2.800 9l3 1 3.400-1.500v3H2.800z" fill="#123f73"/></svg>
  <span class="mt-px w-[159px] pl-[15px] tracking-[0.080px]">psycho-the-rapist.jfif</span>
  <svg class="ml-[15px] h-[7px] w-[10px]" viewBox="0 0 10 7"><path d="M.8 6L5 1.500 9.200 6" fill="none" stroke="#6a6e73" stroke-width="1.700"/></svg>
  <i class="ml-[18px] h-[44px] w-px bg-[#d0d2d5]"></i>
  <div class="mr-[13px] mb-[2px] ml-auto flex h-[32px] w-[105px] items-center justify-center rounded-[4px] border border-[#dadce0] text-[11.900px] text-[#2f66dd]">Alle anzeigen</div>
  <svg class="mr-[13px] mb-[2px] size-[10px]" viewBox="0 0 10 10"><path d="M.7.700l8.600 8.600M9.300.7L.7 9.300" stroke="#5f6368" stroke-width="1.700"/></svg>
</div>

<!-- Taskbar -->
<div class="flex h-[40px] shrink-0 bg-[linear-gradient(to_right,#20373f,#21363f_45%,#1e3040_75%,#1a2840)]">
  <div class="flex w-[46px] items-center justify-center"><svg class="size-4" viewBox="0 0 16 16" fill="#fff"><path d="M0 2.200l6.600-.9v6.300H0zM7.400 1.200L16 0v7.600H7.400zM0 8.400h6.600v6.300L0 13.800zM7.400 8.400H16V16l-8.600-1.200z"/></svg></div>
  <div class="flex w-[52px] items-center justify-center pr-[2px]"><svg class="size-[17px]" viewBox="0 0 17 17" fill="none" stroke="#fff" stroke-width="1.300"><circle cx="10.700" cy="6.300" r="5.500"/><path d="M6.800 10.200L.6 16.400"/></svg></div>
  <div class="flex gap-px">
    <div class="flex w-12 items-center justify-center"><svg class="size-6" viewBox="0 0 24 24"><circle cx="12" cy="12" r="11.800" fill="#0d62ba"/><path d="M1 8C3 3 7.500.2 12.200.2 19 .2 24 5 24 10.600c0 4-2.800 6.400-6.200 6.400-3 0-4.500-1.300-3.800-2.700 1.600-2 .8-6.300-3.500-7.300C6.500 6.300 2.500 8 .3 13c-.2-2 .1-3.500.7-5z" fill="url(#gedge)"/><path d="M9.200 10.500C6 14 8.500 22 16 22.500c2-.5 4.500-2 5.800-4.500-6 2.600-12-1-12.600-7.500z" fill="#0a3e80"/></svg></div>
    <div class="flex w-12 items-center justify-center"><svg class="h-[18px] w-[22px]" viewBox="0 0 22 18"><path d="M0 0h8.500l1.500 2H22v5H0z" fill="#d99a12"/><path d="M0 4h8l2-1.800h12V18H0z" fill="#fcd462"/><path d="M4 18v-7h14v7h-3.500v-3.500h-7V18z" fill="#3d93d6"/></svg></div>
    <div class="flex w-12 items-center justify-center"><svg class="size-6" viewBox="0 0 24 24"><path d="M6.500 8V1.200h11V8" fill="none" stroke="#d9dcde" stroke-width="1.800"/><path d="M.5 6h23v16a2 2 0 01-2 2h-19a2 2 0 01-2-2z" fill="#f1f1f1"/><path d="M7.500 10.500h4v4h-4z" fill="#f25022"/><path d="M12.500 10.500h4v4h-4z" fill="#7fba00"/><path d="M7.500 15.500h4v4h-4z" fill="#00a4ef"/><path d="M12.500 15.500h4v4h-4z" fill="#ffb900"/></svg></div>
    <div class="flex w-12 items-center justify-center"><svg class="size-6" viewBox="0 0 24 24"><path d="M0 8L12 .5 24 8v5H0z" fill="#0b5fae"/><path d="M2.500 8.500h19V14l-9.500 4-9.500-4z" fill="#f4f7fa"/><path d="M0 8.500l12 8.500 12-8.500V23H0z" fill="#27a9ea"/><path d="M24 8.500V23H0z" fill="#44c4f5"/><path d="M2.500 8.500h19L12 15.500z" fill="#f4f7fa"/></svg></div>
    <div class="flex w-12 items-center justify-center border-b-2 border-[#76b9ed] bg-[#4e6067]"><svg class="size-[23px] translate-y-px" viewBox="0 0 24 24"><circle cx="12" cy="12" r="11.500" fill="#fbc116"/><path d="M2 6.300a11.500 11.500 0 0120 0H12L9 13.800z" fill="#e33b2e"/><path d="M2 6.300A11.500 11.500 0 0011 23.450L16.500 14.600 8 14z" fill="#31a350"/><path d="M11 23.450A11.500 11.500 0 0022 6.300H12l4.800 8.200z" fill="#fbc116"/><circle cx="12" cy="12" r="5.500" fill="#fff"/><circle cx="12" cy="12" r="4.300" fill="#4285f4"/></svg></div>
    <div class="flex w-12 items-center justify-center"><svg class="size-6" viewBox="0 0 24 24"><path d="M4 9c3 1 5-1 8-.5 3-4 7-4.500 8-4 1 3-.5 11-5 12.500-4 1.200-9-.5-10.500-3z" fill="#6e6455"/><path d="M12 9c3-4 7-4.500 8-4l-3 4z" fill="#8b8070"/><circle cx="3.200" cy="11" r="2.400" fill="#15171a"/><circle cx="7" cy="9.500" r="2.500" fill="#f4f4f4"/><circle cx="10.800" cy="10" r="2.300" fill="#f4f4f4"/><circle cx="7" cy="9.800" r="1" fill="#111"/><circle cx="10.800" cy="10.200" r="1" fill="#111"/><path d="M10 14.500l8 1.500 5.500 4" stroke="#c3782c" stroke-width="1.600" fill="none"/></svg></div>
    <div class="flex w-12 items-center justify-center"><svg class="size-6" viewBox="0 0 24 24"><path d="M12 1c2 0 10 8 10.500 10 .3 2-4.500 2.500-5 4 0 1.200 3 1.300 3 2.500-1 1.500-5 .5-5.500 2.500 0 2-2 3-3 3s-2-1-1.500-2.500c-1-1.500-5-1-5-3 .5-1 2.500-.8 2.500-2-.5-1.500-6.500-2-6.500-4.500C2 9 10 1 12 1z" fill="#0c0e11"/><path d="M12 1.500c1.500 0 7 6 8.500 8-2 1.500-4 0-5 1.500-1.500-1-2.500 1-4 .3C9 10 6 12.500 3.500 10 5 8 10.500 1.500 12 1.500z" fill="url(#gink)"/></svg></div>
    <div class="flex w-12 flex-col items-center justify-between"><svg class="mt-[9px] size-[21px]" viewBox="0 0 21 21"><path fill="url(#glive)" d="M0 0h21v21H0z"/><text x="3" y="14.500" font-size="10" font-family="Roboto" font-weight="500" fill="#f2f0f4" textLength="15" lengthAdjust="spacingAndGlyphs">Live</text></svg><i class="h-[2px] w-10 bg-[#76b9ed]"></i></div>
    <div class="flex w-12 flex-col items-center justify-between"><svg class="mt-[8px] size-6" viewBox="0 0 24 24"><path d="M3 6C6 1 13-1 18 2c6 3.500 6.500 12 3 17-2 3-5 4.500-8 4.500C5 23.500-1 14 3 6z" fill="url(#gtb)"/><path d="M1 9l15 .5 2 6c-1 5-5 7-8 6.500C5 21 .5 16 1 9z" fill="#eef1f5"/><path d="M1.500 9.500L9.500 15 16 9.700" fill="none" stroke="#b3bcc9" stroke-width="1"/><path d="M7 2c5-2 12 0 14 5-4-3-9-2-11 0z" fill="#5aa2ef"/></svg><div class="flex gap-px"><i class="h-[2px] w-[31px] bg-[#76b9ed]"></i><i class="h-[2px] w-2 bg-[#567f9d]"></i></div></div>
    <div class="flex w-12 flex-col items-center justify-between"><svg class="mt-[8px] size-6" viewBox="0 0 24 24"><circle cx="12" cy="12" r="12" fill="#e95420"/><circle cx="12.300" cy="12" r="5" fill="none" stroke="#fff" stroke-width="2.400"/><g fill="#fff" stroke="#e95420" stroke-width="1"><circle cx="4.900" cy="12" r="2.300"/><circle cx="16" cy="5.600" r="2.300"/><circle cx="16" cy="18.400" r="2.300"/></g></svg><i class="h-[2px] w-10 bg-[#76b9ed]"></i></div>
    <div class="flex w-12 items-center justify-center"><svg class="size-[22px]" viewBox="0 0 22 22"><circle cx="11" cy="11" r="11" fill="url(#gtg)"/><path d="M4.500 10.700L16.500 6l-2 10.500-3.500-2.600-1.800 1.700-.5-3.300 5.600-4.800-7 4.300z" fill="#fff"/></svg></div>
    <div class="flex w-12 items-center justify-center"><svg class="size-[22px]" viewBox="0 0 22 22"><circle cx="7" cy="7" r="6.800" fill="#12a8ea"/><circle cx="15" cy="15" r="6.800" fill="#0a86dd"/><circle cx="11" cy="11" r="10" fill="url(#gsky)"/><text x="6" y="16.500" font-size="16" font-family="Liberation Sans" font-weight="700" fill="#fff">S</text></svg></div>
    <div class="flex w-12 items-center justify-center"><svg class="size-[22px]" viewBox="0 0 22 22"><rect x="1" y="1" width="20" height="20" rx="2.500" fill="#4a1612" stroke="#a3231a" stroke-width="2"/><path d="M4 4.500h14v6H4zM4 12h14v6H4z" fill="#16130f"/><path d="M5 7.500h7M5 15h7" stroke="#a9a39a" stroke-width="2" stroke-dasharray="2 1"/><path d="M14.500 5.500v4H17M14.500 13v4H17" fill="none" stroke="#19d43c" stroke-width="1.700"/></svg></div>
    <div class="flex w-12 items-center justify-center"><svg class="h-[13px] w-[22px]" viewBox="0 0 22 13"><rect x=".7" y=".7" width="20.600" height="11.600" fill="#2a3d48" stroke="#c4cbd0" stroke-width="1.200"/><text x="3" y="9.600" font-size="8.500" font-family="Open Sans" font-weight="600" fill="#fff" textLength="16" lengthAdjust="spacingAndGlyphs">KALI</text></svg></div>
    <div class="flex w-12 items-center justify-center"><svg class="size-6" viewBox="0 0 24 24"><ellipse cx="12" cy="13.500" rx="11" ry="7" fill="none" stroke="#e2662b" stroke-width="1.500"/><path d="M13 20.300c6 0 10-3 10-6.500" fill="none" stroke="#e9a63c" stroke-width="1.500"/><path d="M22 0L1.500 24" stroke="#e8e8e8" stroke-width="2"/><path d="M21 0L.5 24" stroke="#0a0a0a" stroke-width="1.500"/><path d="M1.500.5h5L22 23.500h-5z" fill="#0a0a0a" stroke="#e8e8e8" stroke-width=".5"/></svg></div>
    <div class="flex w-12 flex-col items-center justify-between"><svg class="mt-[8px] size-6" viewBox="0 0 24 24"><path fill="#f6432d" d="M0 0h24v11H0z"/><path fill="#2c3a44" d="M0 12h24v12H0z"/><text x="2" y="8.300" font-size="7.800" font-family="Roboto" font-weight="700" fill="#fff" textLength="20" lengthAdjust="spacingAndGlyphs">VOICE</text><text x=".8" y="21" font-size="8" font-family="Roboto" font-weight="500" fill="#c3c9cd" textLength="22.400" lengthAdjust="spacingAndGlyphs">MEETER</text></svg><i class="h-[2px] w-10 bg-[#76b9ed]"></i></div>
    <div class="flex w-12 flex-col items-center justify-between"><svg class="mt-[8px] size-6" viewBox="0 0 24 24"><path d="M7 19c2 2 4 1 5 .5 2 4 8 4.500 10.500 1.500 2-3 1-7-1-8z" fill="#3f9fc9"/><path d="M10 5c1-5 11-6.500 12.500 0 .5 3-.5 4-.5 6 1 3 0 6-3 6.500-1 1.500-3 1-4 0-1 1.500-4 1.800-5 .8-4 2-9-.3-9.500-4.300-.3-3.500 3-5 5-5C6.500 7 8 5.500 10 5z" fill="#f2fafd"/><path d="M15.500 5l-4 5.500 3.500.5-1.500 5 4.500-6-3.500-.5z" fill="#4aa6cc"/></svg><i class="h-[2px] w-10 bg-[#76b9ed]"></i></div>
    <div class="flex w-12 items-center justify-center"><svg class="size-[22px] -translate-y-px" viewBox="0 0 22 22"><rect width="22" height="22" rx="1" fill="#dcdcda"/><path d="M0 8.500h22" stroke="#77797b" stroke-width="2"/><rect x="6" y="1" width="10" height="11" fill="#4a4c4f"/><rect x="8.800" y="2.500" width="4.400" height="7" fill="#b5281c"/><path d="M2 15.500h18" stroke="#8b8d8f" stroke-width="3" stroke-dasharray="1 1.200"/></svg></div>
    <div class="flex w-12 items-center justify-center border-b-2 border-[#ff7a00] bg-[#a66633]"><svg class="mt-[1px] h-[16px] w-[21px]" viewBox="0 0 21 16"><path fill="#e9ebee" d="M0 0h21v16H0z"/><path d="M0 1h21" stroke="#aeb4ba" stroke-width="1.500"/><path fill="#1277d8" d="M5.500 3.200h8.500v11H5.500z"/><path d="M1.200 5h3M1.200 8h3M1.200 11h3M15.200 5h4.500M15.200 8h4.500M15.200 11h4.500" stroke="#8b9197"/></svg></div>
    <div class="flex w-12 flex-col items-center justify-between"><svg class="mt-[11px] h-[19px] w-[23px]" viewBox="0 0 23 19"><path fill="#cfd1d2" d="M0 0h23v19H0z"/><path fill="#25272a" d="M2 2h19v14.500H2z"/><path d="M2 10l19-6V2H2z" fill="#4a4d50"/><path d="M4.500 5l3 2.200-3 2.200M8.500 9.500h4" fill="none" stroke="#fff" stroke-width="1.200"/></svg><i class="h-[2px] w-10 bg-[#76b9ed]"></i></div>
    <div class="flex w-12 flex-col items-center justify-between"><svg class="mt-[10px] h-[20px] w-[22px]" viewBox="0 0 22 20"><path d="M2.500 2h15l-1 17H.8z" fill="#f2f1ec"/><path d="M2.500 1.800h15" stroke="#5c5e60" stroke-width="2.500" stroke-dasharray="1.200 1"/><path d="M3.500 7h10M3.300 10h8M3 13h6" stroke="#bab9b4"/><path d="M20.500 3.500l-9 10.500-1.200 3.500 3.200-1.500 8.500-10z" fill="#ec9230"/><path d="M19 5.200l1.500-1.700L22 6l-1.300 1.500z" fill="#d2452f"/></svg><i class="h-[2px] w-10 bg-[#76b9ed]"></i></div>
  </div>
  <div class="mt-[2px] mr-[7px] ml-auto text-center text-[11px] leading-[18px] tracking-[-0.330px] text-white">20:15<br>25.08.2021</div>
</div>
</body>
</html>
